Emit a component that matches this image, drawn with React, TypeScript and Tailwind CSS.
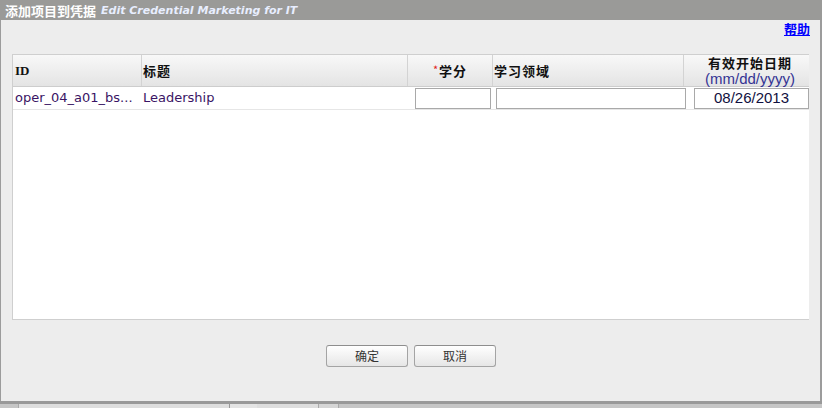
import React from 'react'

const cjk = "font-['Noto_Sans_CJK_SC',sans-serif]"

function HeaderCell({ className, children }: { className: string; children: React.ReactNode }) {
  return (
    <div className={`h-full flex shrink-0 border-r border-[#d3d3d3] ${className}`}>
      {children}
    </div>
  )
}

export default function App() {
  return (
    <div className="w-[822px] h-[408px] flex flex-col bg-[#ededed] overflow-hidden">
      {/* Title bar */}
      <div className="h-[20px] shrink-0 bg-[#9a9a98] flex items-center pl-[5px] gap-[5px]">
        <span className={`${cjk} text-[13px] font-bold text-white leading-none`}>添加项目到凭据</span>
        <span className="font-['DejaVu_Sans',sans-serif] text-[11px] font-bold italic text-[#e8eeff] leading-none">
          Edit Credential Marketing for IT
        </span>
      </div>

      {/* Body */}
      <div className="flex-1 flex flex-col border-l border-r-2 border-[#9c9c9c]">
        <div className="h-[34px] shrink-0 flex justify-end pr-[10px] pt-[1px]">
          <a href="#" className={`${cjk} text-[13px] font-bold text-[#0000ff] underline leading-[16px]`}>
            帮助
          </a>
        </div>

        {/* Grid */}
        <div className="ml-[11px] w-[797px] h-[266px] shrink-0 bg-white border-l border-t border-b border-[#cfcfcf] overflow-hidden">
          <div className="w-[803px] h-[32px] flex border-b border-[#cdcdcd] bg-gradient-to-b from-[#f8f8f8] to-[#e4e4e4] text-[#111]">
            <HeaderCell className="w-[129px] items-center pl-[2px]">
              <span className="font-['Liberation_Serif',serif] font-bold text-[13px]">ID</span>
            </HeaderCell>
            <HeaderCell className="w-[266px] items-center pl-[1px]">
              <span className={`${cjk} font-bold text-[13px] tracking-[1px]`}>标题</span>
            </HeaderCell>
            <HeaderCell className="w-[85px] items-center justify-center">
              <span className={`${cjk} font-bold text-[13px] tracking-[1px]`}>
                <span className="text-[#e02020] font-normal text-[11px] align-top">*</span>学分
              </span>
            </HeaderCell>
            <HeaderCell className="w-[191px] items-center pl-[1px]">
              <span className={`${cjk} font-bold text-[13px] tracking-[1px]`}>学习领域</span>
            </HeaderCell>
            <div className="w-[132px] h-full shrink-0 flex flex-col items-center justify-center">
              <span className={`${cjk} font-bold text-[13px] tracking-[1px] leading-[16px]`}>有效开始日期</span>
              <span className="font-['Liberation_Sans',sans-serif] text-[15px] text-[#343494] leading-[15px]">
                (mm/dd/yyyy)
              </span>
            </div>
          </div>

          <div className="w-[803px] h-[23px] flex items-center border-b border-[#e6e6e6] font-['DejaVu_Sans',sans-serif] text-[13px] text-[#3a1464]">
            <div className="w-[129px] shrink-0 pl-[2px] whitespace-nowrap leading-[18px]">oper_04_a01_bs...</div>
            <div className="w-[266px] shrink-0 pl-[1px] leading-[18px]">Leadership</div>
            <div className="w-[85px] shrink-0 pl-[7px]">
              <input className="w-[76px] h-[21px] border border-[#a9a9a9] bg-white outline-none" />
            </div>
            <div className="w-[191px] shrink-0 pl-[3px]">
              <input className="w-[190px] h-[21px] border border-[#a9a9a9] bg-white outline-none" />
            </div>
            <div className="w-[132px] shrink-0 pl-[10px]">
              <input
                defaultValue="08/26/2013"
                className="w-[115px] h-[21px] border border-[#a9a9a9] bg-white outline-none text-center font-['Liberation_Sans',sans-serif] text-[15px] text-[#101040]"
              />
            </div>
          </div>
        </div>

        {/* Buttons */}
        <div className="flex-1 flex justify-center gap-[6px] pt-[25px] pl-[1px]">
          <button className={`w-[82px] h-[22px] rounded-[3px] border border-[#a4a4a4] border-t-[#8e8e8e] bg-gradient-to-b from-white to-[#e6e6e6] ${cjk} text-[12px] text-[#333] leading-none`}>
            确定
          </button>
          <button className={`w-[82px] h-[22px] rounded-[3px] border border-[#a4a4a4] border-t-[#8e8e8e] bg-gradient-to-b from-white to-[#e6e6e6] ${cjk} text-[12px] text-[#333] leading-none`}>
            取消
          </button>
        </div>
      </div>

      {/* Bottom edge */}
      <div className="h-[3px] shrink-0 bg-[#999]" />
      <div className="h-[4px] shrink-0 flex bg-[#c6c6c6]">
        <div className="w-[19px] border-r border-[#aaa]" />
        <div className="w-[211px] bg-[#dedede] border-r border-[#999]" />
        <div className="w-[27px] bg-[#e4e4e4]" />
        <div className="w-[62px] bg-[#dedede] border-r border-[#aaa]" />
        <div className="w-[20px] bg-[#d6d6d6] border-r border-[#aaa]" />
        <div className="flex-1" />
      </div>
    </div>
  )
}
